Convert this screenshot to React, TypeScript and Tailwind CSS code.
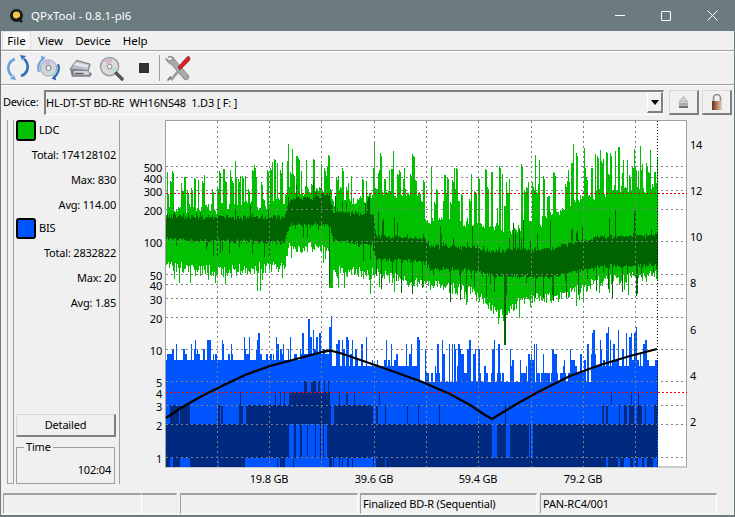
import React from "react";

const FONT = { fontFamily: '"Noto Sans", "Open Sans", sans-serif' };

function mulberry(seed: number) {
  let a = seed;
  return () => {
    a |= 0; a = (a + 0x6d2b79f5) | 0;
    let t = Math.imul(a ^ (a >>> 15), 1 | a);
    t = (t + Math.imul(t ^ (t >>> 7), 61 | t)) ^ t;
    return ((t ^ (t >>> 14)) >>> 0) / 4294967296;
  };
}

function lerp(pts: number[][], x: number) {
  for (let i = 1; i < pts.length; i++) {
    if (x <= pts[i][0]) {
      const [x0, y0] = pts[i - 1];
      const [x1, y1] = pts[i];
      return y0 + ((y1 - y0) * (x - x0)) / (x1 - x0 || 1);
    }
  }
  return pts[pts.length - 1][1];
}

const X0 = 166;
const X1 = 657;

const solidTop = [[166,210],[240,206],[284,200],[288,190],[329,188],[333,203],[372,196],[376,190],[420,195],[424,220],[480,224],[500,228],[540,222],[570,202],[610,190],[657,186]];
const spikeH = [[166,42],[280,50],[330,38],[372,25],[376,40],[420,42],[424,58],[480,60],[540,70],[570,58],[657,40]];
const solidBot = [[166,261],[210,265],[284,261],[288,242],[329,240],[332,264],[372,268],[420,277],[470,285],[492,302],[505,312],[520,293],[560,291],[600,275],[657,270]];
const darkC = [[166,228],[284,230],[290,212],[329,210],[333,226],[373,230],[376,248],[424,250],[430,257],[480,260],[490,264],[550,263],[570,258],[600,252],[657,250]];
const darkH = [[166,10],[280,11],[330,13],[373,14],[378,10],[480,10],[520,12],[657,14]];

function blueParams(x: number): [number, number] {
  if (x < 240) return [8, 12];
  if (x < 300) return [8, 14];
  if (x < 332) return [9, 20];
  if (x < 420) return [6.5, 13];
  if (x < 590) return [5.4, 12];
  return [7, 16];
}
const yOf = (n: number) => Math.round(458 - Math.log10(n) * 109);

function buildPaths() {
  const r = mulberry(771);
  let g = "", d = "", b = "";
  let run = 0, lastTop = 200;
  for (let x = X0; x <= X1; x++) {
    const px = x + 0.5;
    const st = lerp(solidTop, x);
    const sh = lerp(spikeH, x);
    let top: number;
    if (run > 0) { top = lastTop + r() * 3; run--; }
    else {
      top = r() < 0.48 ? st - (0.3 + 0.7 * Math.pow(r(), 1.2)) * sh : st + r() * 10 - 5;
      if (r() < 0.45) run = 1;
      lastTop = top;
    }
    if (x === 374) top = 142;
    let bot = lerp(solidBot, x) + r() * 12;
    if (r() < 0.1) bot += r() * 18;
    if (x > 328 && x < 333) bot = 288;
    g += `M${px} ${top.toFixed(0)}V${bot.toFixed(0)}`;

    const c = lerp(darkC, x) + (r() - 0.5) * 3;
    const h = lerp(darkH, x);
    let dt = c - h - r() * 3;
    let db = c + h + r() * 3;
    const k = r();
    if (k < 0.15) dt -= r() * (x > 373 ? 30 : x > 290 ? 18 : 10);
    if (k > 0.85) db += r() * (x > 373 ? 32 : 16);
    if (x === 504 || x === 505) db = 345;
    if (x === 329) db = 285;
    d += `M${px} ${dt.toFixed(0)}V${db.toFixed(0)}`;
  }
  let x = X0;
  while (x <= X1) {
    const w = r() < 0.6 ? 1 : 2;
    const [base, max] = blueParams(x);
    const lvl = r() < 0.3 ? base : base + Math.pow(r(), 2.2) * (max - base);
    const t = yOf(Math.round(lvl));
    for (let i = 0; i < w && x <= X1; i++, x++) b += `M${x + 0.5} ${t}V467`;
  }
  return { g, d, b };
}

const BANDS: [number, number, number[][]][] = [
  [424, 458, [[166,289],[294,296],[300,302],[307,308],[315,316],[320,321],[323,324],[327,492],[497,506],[510,529],[530,531],[533,657]]],
  [458, 467, [[166,170],[173,180],[190,218],[219,224],[224,239],[239,245],[277,278],[280,285],[293,294],[329,332],[333,334],[339,340],[342,343],[347,349],[352,353],[373,374],[376,385],[386,606],[608,618],[620,624],[630,633],[635,638],[642,644],[647,653]]],
  [405, 424, [[170,179],[180,190],[218,220],[221,223],[239,243],[246,331],[334,373],[376,378],[385,386],[407,408],[418,419],[439,440],[505,506],[602,604],[606,608],[619,620],[624,627],[629,634],[637,642],[645,646],[654,657]]],
  [392, 405, [[240,241],[275,276],[280,281],[284,285],[289,330],[339,340],[346,348],[354,355],[379,380],[611,612],[631,632],[638,639]]],
  [381, 392, [[304,307],[311,316],[318,320],[324,325],[328,329]]],
];

const HY = [166.5, 177.5, 190.5, 209.5, 241.5, 274.5, 284.5, 298.5, 317.5, 349.5, 381.5, 405.5, 424.5, 457.5];
const VX = [217.5, 269.5, 321.5, 374.5, 426.5, 478.5, 531.5, 583.5, 635.5];
const LEFT: [string, number][] = [["500",167],["400",178],["300",191],["200",210],["100",242],["50",275],["40",285],["30",299],["20",318],["10",350],["5",382],["4",393],["3",406],["2",425],["1",458]];
const RIGHT: [string, number][] = [["14",144],["12",190],["10",236],["8",282],["6",329],["4",375],["2",421]];
const BOTTOM: [string, number][] = [["19.8 GB",269],["39.6 GB",374],["59.4 GB",478],["79.2 GB",583]];

function Chart() {
  const { g, d, b } = React.useMemo(buildPaths, []);
  const textProps = { fontSize: 11, letterSpacing: -0.2, fill: "#000", dominantBaseline: "central" as const };
  return (
    <svg width={610} height={376} viewBox="125 117 610 376" className="block shrink-0" style={FONT}>
      <rect x={165.5} y={120.5} width={521} height={346.5} fill="#fff" stroke="#a0a0a0" />
      <g shapeRendering="crispEdges">
        <path d={g} stroke="#00c000" strokeWidth={1} fill="none" />
        <path d={d} stroke="#006400" strokeWidth={1} fill="none" />
        <path d={b} stroke="#0055ff" strokeWidth={1} fill="none" />
        {BANDS.map(([y0, y1, runs], i) =>
          runs.map(([a, c], j) => <rect key={`${i}-${j}`} x={a} y={y0} width={c - a} height={y1 - y0} fill="#002a80" />)
        )}
        {HY.map((y) => <line key={y} x1={166} x2={687} y1={y} y2={y} stroke="#808080" strokeDasharray="2 3" />)}
        {VX.map((x) => <line key={x} x1={x} x2={x} y1={121} y2={467} stroke="#808080" strokeDasharray="2 3" />)}
        <line x1={657.5} x2={657.5} y1={121} y2={467} stroke="#000" strokeDasharray="1 2" />
        <line x1={166} x2={687} y1={193.5} y2={193.5} stroke="#d00000" strokeDasharray="2 2" />
        <line x1={166} x2={687} y1={392.5} y2={392.5} stroke="#ff0000" strokeDasharray="2 2" />
      </g>
      <polyline fill="none" stroke="#000" strokeWidth={2.3} strokeLinejoin="round" points="166,418 180,408.5 200,397 222,386 245,375 270,366 300,358 322,352 330,350.5 340,353 375,365 420,381 450,394 470,405 485,415 492,419 505,411 520,402 540,391 570,376 600,365 630,356 657,349" />
      {LEFT.map(([t, y]) => <text key={t} x={162} y={y} textAnchor="end" {...textProps}>{t}</text>)}
      {RIGHT.map(([t, y]) => <text key={t} x={690} y={y} {...textProps}>{t}</text>)}
      {BOTTOM.map(([t, x]) => <text key={t} x={x} y={478} textAnchor="middle" {...textProps}>{t}</text>)}
    </svg>
  );
}

function AppIcon() {
  return (
    <svg width={16} height={16} viewBox="0 0 16 16" className="block">
      <circle cx={7.5} cy={7.5} r={6.5} fill="#1a1a1a" />
      <circle cx={7.5} cy={7} r={3.6} fill="#f4c64a" />
      <path d="M9 10l4 4" stroke="#1a1a1a" strokeWidth={2.5} />
    </svg>
  );
}

function Refresh() {
  return (
    <svg width={24} height={26} viewBox="0 0 24 26">
      <path d="M9 4C3 6 1 12 3 17c.7 1.7 1.8 3 3 4" fill="none" stroke="#6ba1dd" strokeWidth={2.6} />
      <path d="M15 21c6-2 8-8 6-13-.7-1.7-1.8-3-3-4" fill="none" stroke="#2f6fb8" strokeWidth={2.6} />
      <path d="M8 20l2 5-6-1z" fill="#6ba1dd" />
      <path d="M16 5l-2-5 6 1z" fill="#2f6fb8" />
    </svg>
  );
}

function DiscRefresh() {
  return (
    <svg width={25} height={26} viewBox="0 0 26 26">
      <circle cx={13} cy={13} r={8.5} fill="#cfd4da" stroke="#9aa0a8" />
      <path d="M13 13L8 6a9 9 0 0 1 8-1z" fill="#c9b8e4" />
      <path d="M13 13l7 4a9 9 0 0 1-6 4z" fill="#bfe2cf" />
      <circle cx={13} cy={13} r={2.6} fill="#f4f4f4" stroke="#777" />
      <path d="M8 3C3 6 1 12 3 17" fill="none" stroke="#6ba1dd" strokeWidth={2.4} />
      <path d="M18 23c5-3 7-9 5-14" fill="none" stroke="#2f6fb8" strokeWidth={2.4} />
      <path d="M10 2L5 0l1 6z" fill="#6ba1dd" />
      <path d="M16 24l5 2-1-6z" fill="#2f6fb8" />
    </svg>
  );
}

function Scanner() {
  return (
    <svg width={25} height={20} viewBox="0 0 26 20">
      <path d="M1 11L8 2l14 4-2 7z" fill="#b8bcc4" stroke="#70757d" />
      <path d="M7 4l13 3-1 3L5 7z" fill="#e4e6ea" />
      <path d="M1 11l19 2 4 3-2 3H3z" fill="#7d828a" />
      <path d="M5 13h14l2 2v2H5z" fill="#d4d6da" />
      <rect x={6} y={15} width={9} height={1.5} fill="#55585e" />
    </svg>
  );
}

function Magnifier() {
  return (
    <svg width={25} height={25} viewBox="0 0 26 26">
      <circle cx={11} cy={11} r={9.5} fill="#d8dade" stroke="#9a9da3" strokeWidth={1.5} />
      <path d="M11 11L5 5a9 9 0 0 1 9-2z" fill="#d9b6c8" />
      <path d="M11 11l8 2a9 9 0 0 1-4 6z" fill="#b9e0c8" />
      <circle cx={11} cy={11} r={2.4} fill="#f5f5f5" stroke="#888" />
      <path d="M18 18l6 6" stroke="#555" strokeWidth={3.6} strokeLinecap="round" />
    </svg>
  );
}

function Tools() {
  return (
    <svg width={26} height={27} viewBox="0 0 26 27">
      <path d="M3 2c3-1 6 0 7 3l13 15c1 1 1 3 0 4s-3 1-4 0L6 9C3 8 1 6 1 3l3 3 3-1 1-3z" fill="#a6aaa9" stroke="#6f7372" strokeWidth={0.7} />
      <path d="M5 24L14 13l2 2-9 11z" fill="#9b9fa3" />
      <path d="M13 12L22 2c1-1 3 0 3 1s0 2-1 3L15 15z" fill="#d2242a" stroke="#8f1115" strokeWidth={0.6} />
      <path d="M2 25l3-4 2 2-4 3z" fill="#777" />
    </svg>
  );
}

function Eject() {
  return (
    <svg width={11} height={13} viewBox="0 0 12 13">
      <path d="M6 0l5 6H1z" fill="#d0d0d0" stroke="#9a9a9a" strokeWidth={0.7} />
      <rect x={1} y={7} width={10} height={2.5} fill="#a8a8a8" />
      <rect x={1} y={10} width={10} height={2.5} fill="#6f6f6f" />
    </svg>
  );
}

function Lock() {
  return (
    <svg width={12} height={16} viewBox="0 0 12 16">
      <path d="M2.5 7V4a3.5 3.5 0 0 1 7 0v3" fill="none" stroke="#8d8d8d" strokeWidth={1.6} />
      <defs>
        <linearGradient id="lk" x1="0" x2="1" y1="0" y2="0">
          <stop offset="0" stopColor="#6b2d1c" />
          <stop offset="0.6" stopColor="#c09070" />
          <stop offset="1" stopColor="#e8d8c0" />
        </linearGradient>
      </defs>
      <rect x={1} y={7} width={10} height={9} fill="url(#lk)" />
    </svg>
  );
}

function Stat({ label, value }: { label: string; value: string }) {
  return <div className="h-[25px] flex items-center justify-end pr-[3px]">{label}: {value}</div>;
}

function Swatch({ color, label }: { color: string; label: string }) {
  return (
    <div className="h-[20px] flex items-center pl-[2px] gap-[3px]">
      <div className={`w-[20px] h-[21px] rounded-[3px] border-2 border-black ${color}`} />
      <span>{label}</span>
    </div>
  );
}

export default function App() {
  return (
    <div className="w-[735px] h-[517px] overflow-hidden bg-[#f0f0f0] flex flex-col text-[11px] tracking-[-0.2px] text-black border-l border-r border-b-2 border-[#6b7b7f]" style={FONT}>
      <div className="h-[31px] shrink-0 bg-[#6b7b7f] flex items-center -mx-px text-white">
        <div className="ml-[9px] mr-[6px]"><AppIcon /></div>
        <span className="text-[11.5px] tracking-normal">QPxTool - 0.8.1-pl6</span>
        <div className="ml-auto flex items-center">
          <div className="w-[46px] h-[31px] flex items-center justify-center">
            <div className="w-[10px] h-px bg-white" />
          </div>
          <div className="w-[46px] h-[31px] flex items-center justify-center">
            <div className="w-[10px] h-[10px] border border-white rounded-[1px]" />
          </div>
          <div className="w-[46px] h-[31px] flex items-center justify-center">
            <svg width={11} height={11} viewBox="0 0 11 11"><path d="M.5.5l10 10M10.5.5l-10 10" stroke="#fff" /></svg>
          </div>
        </div>
      </div>

      <div className="h-[20px] shrink-0 flex items-center border-b border-[#a0a0a0] pl-px text-[11.5px] tracking-normal">
        <div className="h-[19px] w-[29px] flex items-center justify-center bg-[#f8f8f8] border border-[#e0e0e0]">File</div>
        <div className="ml-[7px]">View</div>
        <div className="ml-[12px]">Device</div>
        <div className="ml-[12px]">Help</div>
      </div>

      <div className="h-[34px] shrink-0 flex items-center border-t border-white border-b border-b-[#a0a0a0] pl-[5px]">
        <div className="w-[30px] flex justify-start"><Refresh /></div>
        <div className="w-[30px] flex justify-start"><DiscRefresh /></div>
        <div className="w-[30px] flex justify-center"><Scanner /></div>
        <div className="w-[30px] flex justify-center"><Magnifier /></div>
        <div className="w-[35px] flex justify-center"><div className="w-[10px] h-[10px] bg-[#333]" /></div>
        <div className="w-px h-[26px] bg-[#a0a0a0] ml-[-2px]" />
        <div className="ml-[5px]"><Tools /></div>
      </div>

      <div className="h-[32px] shrink-0 flex items-center border-t border-white pl-[2px] pt-[2px]">
        <span className="w-[41px]">Device:</span>
        <div className="w-[620px] h-[25px] flex items-center border-t-2 border-l-2 border-[#808080] border-r border-r-white border-b border-b-white">
          <span className="whitespace-pre">HL-DT-ST BD-RE  WH16NS48  1.D3 [ F: ]</span>
          <div className="ml-auto mb-px w-[16px] h-[21px] flex items-center justify-center border-r-2 border-b-2 border-[#808080] border-l border-t border-l-white border-t-white">
            <svg width={8} height={5} viewBox="0 0 8 5"><path d="M0 0h8L4 5z" fill="#000" /></svg>
          </div>
        </div>
        <div className="ml-[5px] w-[30px] h-[25px] flex items-center justify-center border-r-2 border-b-2 border-[#808080] border-l border-t border-l-[#d8d8d8] border-t-[#d8d8d8]"><Eject /></div>
        <div className="ml-[3px] w-[30px] h-[25px] flex items-center justify-center border-r-2 border-b-2 border-[#808080] border-l border-t border-l-[#d8d8d8] border-t-[#d8d8d8]"><Lock /></div>
      </div>

      <div className="h-[376px] shrink-0 flex">
        <div className="ml-[6px] mt-[3px] mb-[9px] w-[6px] border-l border-b border-[#a0a0a0] shrink-0" />
        <div className="w-[107px] mt-[3px] mb-[9px] flex flex-col border-l border-r border-[#a0a0a0] shrink-0">
          <Swatch color="bg-[#00c000]" label="LDC" />
          <div className="h-[3px]" />
          <Stat label="Total" value="174128102" />
          <Stat label="Max" value="830" />
          <Stat label="Avg" value="114.00" />
          <Swatch color="bg-[#0055ff]" label="BIS" />
          <div className="h-[3px]" />
          <Stat label="Total" value="2832822" />
          <Stat label="Max" value="20" />
          <Stat label="Avg" value="1.85" />
          <div className="flex-1" />
          <div className="ml-[2px] w-[100px] h-[23px] flex items-center justify-center border-r-2 border-b-2 border-[#808080] border-l border-t border-l-[#d8d8d8] border-t-[#d8d8d8]">Detailed</div>
          <fieldset className="ml-[2px] mt-[3px] w-[99px] h-[44px] border border-[#a0a0a0] px-[3px]">
            <legend className="ml-[4px] px-[2px] leading-[14px]">Time</legend>
            <div className="text-right pt-[8px] leading-[16px]">102:04</div>
          </fieldset>
        </div>
        <div className="w-[5px] shrink-0" />
        <Chart />
      </div>

      <div className="h-[21px] shrink-0 flex pl-[2px]">
        <div className="w-[138px] border-t-2 border-l border-[#a0a0a0] border-b border-b-white" />
        <div className="w-[36px] border-t-2 border-[#a0a0a0] border-l border-l-white border-r border-r-[#e8e8e8] border-b border-b-white" />
        <div className="ml-[3px] w-[178px] border-t-2 border-l border-[#a0a0a0] border-b border-b-white border-r border-r-white" />
        <div className="ml-[2px] w-[177px] flex items-center pl-[2px] border-t-2 border-l border-[#a0a0a0] border-b border-b-white border-r border-r-white whitespace-nowrap">Finalized BD-R (Sequential)</div>
        <div className="ml-[3px] w-[177px] flex items-center pl-[2px] border-t-2 border-l border-[#a0a0a0] border-b border-b-white border-r border-r-white">PAN-RC4/001</div>
      </div>
    </div>
  );
}
